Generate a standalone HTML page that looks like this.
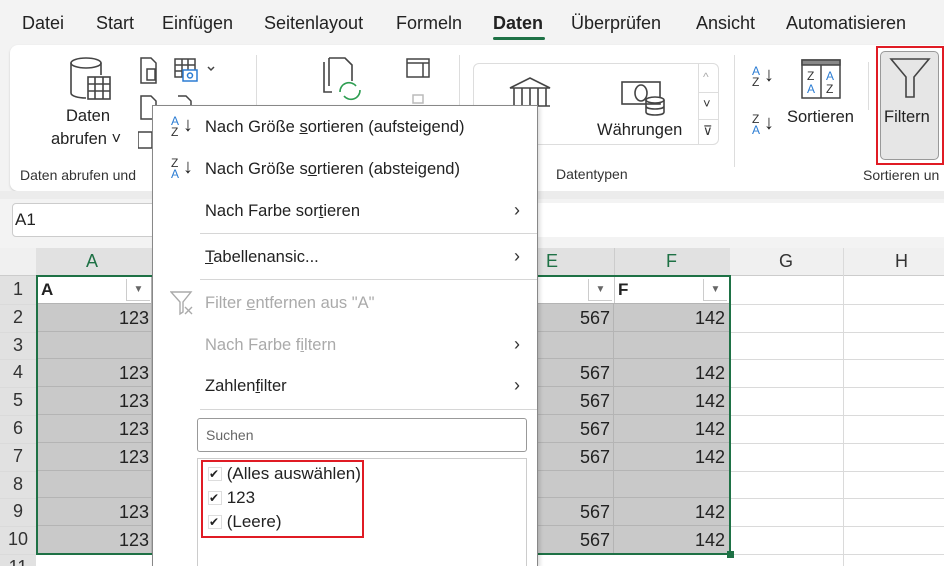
<!DOCTYPE html>
<html style="width:944px;height:566px;overflow:hidden"><head><meta charset="utf-8"><style>
*{margin:0;padding:0;box-sizing:border-box}
body{width:944px;height:566px;overflow:hidden;background:#f3f3f3;font-family:"Liberation Sans",sans-serif;color:#222;position:relative}
.a{position:absolute;white-space:nowrap}
.tab{top:13px;font-size:18px;color:#222}
.gl{font-size:14px;color:#333}
.mi{font-size:16.5px;color:#222;left:205px}
.dis{color:#aaa}
.sep{position:absolute;left:200px;width:337px;height:1px;background:#d6d6d6}
.cell{position:absolute;background:#c9c9c9;border-bottom:1px solid #b4b4b4;border-right:1px solid #b4b4b4}
.num{font-size:18px;text-align:right}
.rh{position:absolute;left:0;width:36px;text-align:center;font-size:18px;color:#333}
.hl{position:absolute;height:1px;background:#dadada}
.vl{position:absolute;width:1px;background:#dadada}
.chev{font-size:18px;color:#333}
</style></head><body>
<div class="a tab" style="left:22px">Datei</div>
<div class="a tab" style="left:96px">Start</div>
<div class="a tab" style="left:162px">Einfügen</div>
<div class="a tab" style="left:264px">Seitenlayout</div>
<div class="a tab" style="left:396px">Formeln</div>
<div class="a tab" style="left:493px;font-weight:bold">Daten</div>
<div class="a" style="left:493px;top:37px;width:52px;height:3px;background:#1e7145;border-radius:2px"></div>
<div class="a tab" style="left:571px">Überprüfen</div>
<div class="a tab" style="left:696px">Ansicht</div>
<div class="a tab" style="left:786px">Automatisieren</div>
<div class="a" style="left:10px;top:45px;width:950px;height:146px;background:#fff;border-radius:8px;box-shadow:0 1px 2px #ccc"></div>
<svg class="a" style="left:66px;top:55px" width="50" height="50" viewBox="0 0 50 50" fill="none" stroke="#444" stroke-width="1.6"><ellipse cx="20" cy="8" rx="15" ry="5"/><path d="M5 8v30c0 3 7 5 15 5M35 8v12"/><rect x="22" y="22" width="22" height="22" fill="#fff"/><path d="M22 29h22M22 36h22M29 22v22M37 22v22"/></svg>
<div class="a" style="left:66px;top:107px;font-size:16.5px">Daten</div>
<div class="a" style="left:51px;top:130px;font-size:16.5px">abrufen ˅</div>
<svg class="a" style="left:138px;top:56px" width="84" height="30" fill="none" stroke="#444" stroke-width="1.5"><path d="M3 2h10l5 5v20H3z"/><rect x="9" y="13" width="8" height="11"/><rect x="37" y="3" width="20" height="18"/><path d="M37 9h20M37 15h20M44 3v18M50 3v18"/><rect x="45" y="14" width="14" height="11" fill="#fff" stroke="#2b7cd3"/><circle cx="52" cy="19.5" r="2.5" stroke="#2b7cd3"/><path d="M70 11l3 3 3-3"/></svg>
<svg class="a" style="left:138px;top:94px" width="60" height="60" fill="none" stroke="#444" stroke-width="1.5"><path d="M3 2h10l5 5v18H3z"/><path d="M40 2h8l5 5v10"/><rect x="0" y="38" width="14" height="16"/></svg>
<div class="a" style="left:256px;top:55px;width:1px;height:112px;background:#ddd"></div>
<svg class="a" style="left:320px;top:56px" width="50" height="50" fill="none" stroke="#444" stroke-width="1.6"><path d="M4 6v30h8M9 2h16l7 7v16M9 2v28"/><path d="M20 36a9 9 0 0 1 16-6M40 34a9 9 0 0 1-16 6" stroke="#2e9e52"/></svg>
<svg class="a" style="left:405px;top:57px" width="26" height="60" fill="none" stroke="#444" stroke-width="1.5"><rect x="2" y="2" width="22" height="18"/><path d="M2 6h22M18 6v14" /><rect x="8" y="38" width="10" height="8" stroke="#bbb"/></svg>
<div class="a" style="left:459px;top:55px;width:1px;height:112px;background:#ddd"></div>
<div class="a" style="left:473px;top:63px;width:246px;height:82px;border:1px solid #ddd;border-radius:6px"></div>
<div class="a" style="left:698px;top:63px;width:1px;height:82px;background:#ddd"></div>
<div class="a" style="left:699px;top:92px;width:20px;height:1px;background:#ddd"></div>
<div class="a" style="left:699px;top:119px;width:20px;height:1px;background:#ddd"></div>
<div class="a" style="left:703px;top:70px;font-size:12px;color:#aaa">^</div>
<div class="a" style="left:703px;top:96px;font-size:13px;color:#333">˅</div>
<div class="a" style="left:703px;top:123px;font-size:13px;color:#333">⊽</div>
<svg class="a" style="left:508px;top:76px" width="44" height="36" fill="none" stroke="#444" stroke-width="1.6"><path d="M2 12L22 2l20 10zM6 12v18M14 12v18M22 12v18M30 12v18M38 12v18M2 30h40"/></svg>
<svg class="a" style="left:620px;top:80px" width="48" height="36" fill="none" stroke="#444" stroke-width="1.6"><rect x="2" y="2" width="38" height="22"/><ellipse cx="21" cy="13" rx="6" ry="8"/><ellipse cx="35" cy="20" rx="9" ry="3" fill="#fff"/><path d="M26 20v12c0 2 4 3 9 3s9-1 9-3V20M26 26c0 2 4 3 9 3s9-1 9-3"/></svg>
<div class="a" style="left:597px;top:121px;font-size:16.5px">Währungen</div>
<div class="a gl" style="left:556px;top:166px">Datentypen</div>
<div class="a" style="left:734px;top:55px;width:1px;height:112px;background:#ddd"></div>
<div class="a" style="left:752px;top:66px;font-size:12px;line-height:11px;color:#2b7cd3">A<br><span style="color:#333">Z</span></div><div class="a" style="left:764px;top:64px;font-size:20px">↓</div>
<div class="a" style="left:752px;top:114px;font-size:12px;line-height:11px;color:#333">Z<br><span style="color:#2b7cd3">A</span></div><div class="a" style="left:764px;top:112px;font-size:20px">↓</div>
<svg class="a" style="left:800px;top:58px" width="42" height="42" fill="none" stroke="#444" stroke-width="1.5"><rect x="2" y="2" width="38" height="38"/><rect x="2" y="2" width="38" height="5" fill="#888"/><path d="M21 7v33"/><text x="7" y="22" font-size="12" fill="#333" stroke="none" font-family="Liberation Sans">Z</text><text x="7" y="35" font-size="12" fill="#2b7cd3" stroke="none" font-family="Liberation Sans">A</text><text x="26" y="22" font-size="12" fill="#2b7cd3" stroke="none" font-family="Liberation Sans">A</text><text x="26" y="35" font-size="12" fill="#333" stroke="none" font-family="Liberation Sans">Z</text></svg>
<div class="a" style="left:787px;top:108px;font-size:16.5px">Sortieren</div>
<div class="a" style="left:868px;top:62px;width:1px;height:48px;background:#ddd"></div>
<div class="a" style="left:876px;top:46px;width:68px;height:119px;border:2px solid #e01b24"></div>
<div class="a" style="left:880px;top:51px;width:59px;height:109px;background:#e6e6e6;border:1px solid #999;border-radius:5px"></div>
<svg class="a" style="left:888px;top:57px" width="44" height="44" fill="none" stroke="#444" stroke-width="1.6"><path d="M3 2h38L26 20v20h-8V20z"/></svg>
<div class="a" style="left:884px;top:108px;font-size:16.5px">Filtern</div>
<div class="a gl" style="left:20px;top:167px">Daten abrufen und</div>
<div class="a gl" style="left:863px;top:167px">Sortieren un</div>
<div class="a" style="left:0;top:191px;width:944px;height:8px;background:#ececec"></div>
<div class="a" style="left:0;top:200px;width:944px;height:40px;background:#f3f3f3"></div>
<div class="a" style="left:12px;top:203px;width:150px;height:34px;background:#fff;border:1px solid #ccc;border-radius:4px"></div>
<div class="a" style="left:15px;top:210px;font-size:17px">A1</div>
<div class="a" style="left:170px;top:203px;width:774px;height:34px;background:#fff"></div>
<div class="a" style="left:0;top:248px;width:944px;height:318px;background:#fff"></div>
<div class="a" style="left:0;top:248px;width:944px;height:28px;background:#f0f0f0;border-bottom:1px solid #ccc"></div>
<div class="a" style="left:36px;top:248px;width:578px;height:28px;background:#e1e1e1"></div>
<div class="a" style="left:614px;top:248px;width:116px;height:28px;background:#e1e1e1"></div>
<div class="a" style="left:0;top:276px;width:36px;height:290px;background:#e1e1e1"></div>
<div class="a" style="left:86px;top:251px;font-size:18px;color:#1e7145">A</div>
<div class="a" style="left:546px;top:251px;font-size:18px;color:#1e7145">E</div>
<div class="a" style="left:666px;top:251px;font-size:18px;color:#1e7145">F</div>
<div class="a" style="left:779px;top:251px;font-size:18px;color:#333">G</div>
<div class="a" style="left:895px;top:251px;font-size:18px;color:#333">H</div>
<div class="vl" style="left:843px;top:248px;height:318px"></div>
<div class="vl" style="left:614px;top:248px;height:28px;background:#ccc"></div>
<div id="rows"></div>
<script>
let h='';const top0=276,rh=27.8;
const vals=[null,'123',null,'123','123','123','123',null,'123','123'];
for(let i=0;i<11;i++){const y=top0+i*rh;
h+=`<div class="rh" style="top:${y+3}px">${i+1}</div>`;
h+=`<div class="hl" style="left:0;top:${y+rh}px;width:944px"></div>`;
if(i<10){
h+=`<div class="cell" style="left:36px;top:${y}px;width:116px;height:${rh}px"></div>`;
h+=`<div class="cell" style="left:537px;top:${y}px;width:77px;height:${rh}px"></div>`;
h+=`<div class="cell" style="left:614px;top:${y}px;width:116px;height:${rh}px"></div>`;
if(i>0&&vals[i]){h+=`<div class="a num" style="left:60px;width:89px;top:${y+4}px">123</div><div class="a num" style="left:537px;width:73px;top:${y+4}px">567</div><div class="a num" style="left:614px;width:111px;top:${y+4}px">142</div>`;}
}}
document.getElementById('rows').innerHTML=h;
</script>
<div class="a" style="left:37px;top:277px;width:114px;height:26px;background:#fff"></div>
<div class="a" style="left:615px;top:277px;width:114px;height:26px;background:#fff"></div>
<div class="a" style="left:537px;top:277px;width:77px;height:26px;background:#fff"></div>
<div class="a" style="left:41px;top:280px;font-size:17px;font-weight:bold">A</div>
<div class="a" style="left:618px;top:280px;font-size:17px;font-weight:bold">F</div>
<div class="a" style="left:126px;top:279px;width:24px;height:22px;border-left:1px solid #ccc;border-bottom:1px solid #ccc;background:#fff;font-size:10px;color:#666;text-align:center;line-height:22px">▼</div>
<div class="a" style="left:588px;top:279px;width:24px;height:22px;border-left:1px solid #ccc;border-bottom:1px solid #ccc;background:#fff;font-size:10px;color:#666;text-align:center;line-height:22px">▼</div>
<div class="a" style="left:703px;top:279px;width:24px;height:22px;border-left:1px solid #ccc;border-bottom:1px solid #ccc;background:#fff;font-size:10px;color:#666;text-align:center;line-height:22px">▼</div>
<div class="a" style="left:36px;top:275px;width:695px;height:280px;border:2px solid #1e7145"></div>
<div class="a" style="left:727px;top:551px;width:7px;height:7px;background:#1e7145"></div>
<div class="a" style="left:152px;top:105px;width:386px;height:461px;background:#fff;border:1px solid #888;border-bottom:none;box-shadow:2px 2px 4px rgba(0,0,0,.15)"></div>
<div class="a" style="left:171px;top:116px;font-size:12px;line-height:11px;color:#2b7cd3">A<br><span style="color:#333">Z</span></div><div class="a" style="left:183px;top:114px;font-size:20px">↓</div>
<div class="a" style="left:171px;top:158px;font-size:12px;line-height:11px;color:#333">Z<br><span style="color:#2b7cd3">A</span></div><div class="a" style="left:183px;top:156px;font-size:20px">↓</div>
<div class="a mi" style="top:118px">Nach Größe <u>s</u>ortieren (aufsteigend)</div>
<div class="a mi" style="top:160px">Nach Größe s<u>o</u>rtieren (absteigend)</div>
<div class="a mi" style="top:202px">Nach Farbe sor<u>t</u>ieren</div>
<div class="a chev" style="left:514px;top:200px">›</div>
<div class="sep" style="top:233px"></div>
<div class="a mi" style="top:248px"><u>T</u>abellenansic...</div>
<div class="a chev" style="left:514px;top:246px">›</div>
<div class="sep" style="top:279px"></div>
<svg class="a" style="left:170px;top:290px" width="24" height="26" fill="none" stroke="#aaa" stroke-width="1.4"><path d="M1 2h20L13 12v10l-3 2V12z"/><path d="M15 17l7 7M22 17l-7 7"/></svg>
<div class="a mi dis" style="top:294px">Filter <u>e</u>ntfernen aus "A"</div>
<div class="a mi dis" style="top:336px">Nach Farbe f<u>i</u>ltern</div>
<div class="a chev dis" style="left:514px;top:334px">›</div>
<div class="a mi" style="top:377px">Zahlen<u>f</u>ilter</div>
<div class="a chev" style="left:514px;top:375px">›</div>
<div class="sep" style="top:409px"></div>
<div class="a" style="left:197px;top:418px;width:330px;height:34px;border:1px solid #999;border-radius:3px"></div>
<div class="a" style="left:206px;top:427px;font-size:14px;color:#666">Suchen</div>
<div class="a" style="left:197px;top:458px;width:330px;height:108px;border:1px solid #ccc;border-bottom:none"></div>
<div class="a" style="left:201px;top:460px;width:163px;height:78px;border:2px solid #e01b24"></div>
<div class="a" style="left:208px;top:462px;font-size:17px;line-height:24px">
<div><span style="display:inline-block;width:14px;height:14px;border:1px solid #ddd;font-size:12px;line-height:12px;vertical-align:1px">✔</span> (Alles auswählen)</div>
<div><span style="display:inline-block;width:14px;height:14px;border:1px solid #ddd;font-size:12px;line-height:12px;vertical-align:1px">✔</span> 123</div>
<div><span style="display:inline-block;width:14px;height:14px;border:1px solid #ddd;font-size:12px;line-height:12px;vertical-align:1px">✔</span> (Leere)</div>
</div>
</body></html>
